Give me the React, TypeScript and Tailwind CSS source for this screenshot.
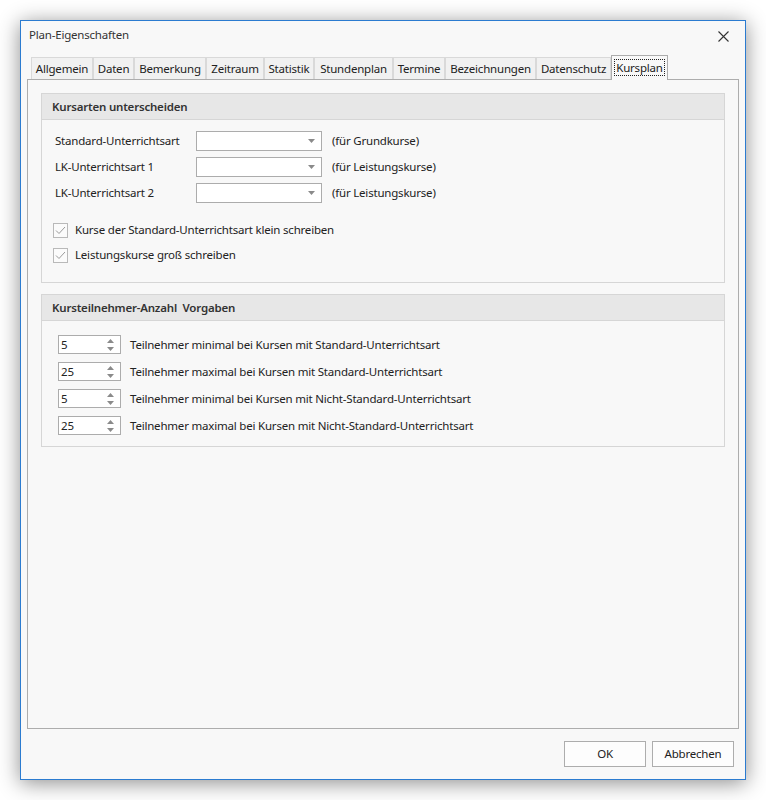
import React from 'react'

const tabs = [
  { label: 'Allgemein', w: 'w-[62px]' },
  { label: 'Daten', w: 'w-[41px]' },
  { label: 'Bemerkung', w: 'w-[72px]' },
  { label: 'Zeitraum', w: 'w-[58px]' },
  { label: 'Statistik', w: 'w-[50px]' },
  { label: 'Stundenplan', w: 'w-[79px]' },
  { label: 'Termine', w: 'w-[52px]' },
  { label: 'Bezeichnungen', w: 'w-[91px]' },
  { label: 'Datenschutz', w: 'w-[75px]' },
]

const dropdowns = [
  { label: 'Standard-Unterrichtsart', hint: '(für Grundkurse)' },
  { label: 'LK-Unterrichtsart 1', hint: '(für Leistungskurse)' },
  { label: 'LK-Unterrichtsart 2', hint: '(für Leistungskurse)' },
]

const spins = [
  { value: '5', text: 'Teilnehmer minimal bei Kursen mit Standard-Unterrichtsart' },
  { value: '25', text: 'Teilnehmer maximal bei Kursen mit Standard-Unterrichtsart' },
  { value: '5', text: 'Teilnehmer minimal bei Kursen mit Nicht-Standard-Unterrichtsart' },
  { value: '25', text: 'Teilnehmer maximal bei Kursen mit Nicht-Standard-Unterrichtsart' },
]

const Combo: React.FC = () => (
  <div className="w-[126px] h-[20px] bg-white border border-[#acacac] flex items-center justify-end pr-[6px]">
    <svg width="7" height="4" viewBox="0 0 7 4"><path d="M0 0h7L3.5 4z" fill="#8a8a8a" /></svg>
  </div>
)

const Check: React.FC<{ label: string }> = ({ label }) => (
  <div className="flex items-center h-[16px]">
    <div className="w-[15px] h-[15px] border border-[#b9b9b9] bg-[#fbfbfb] flex items-center justify-center">
      <svg width="11" height="9" viewBox="0 0 11 9"><path d="M1 4.5l3 3L10 1" fill="none" stroke="#9a9a9a" strokeWidth="1" /></svg>
    </div>
    <span className="ml-[7px]">{label}</span>
  </div>
)

const Spin: React.FC<{ value: string }> = ({ value }) => (
  <div className="w-[63px] h-[19px] bg-white border border-[#acacac] flex items-center justify-between pl-[2px] pr-[6px]">
    <span className="leading-none">{value}</span>
    <div className="flex flex-col gap-[4px]">
      <svg width="7" height="4" viewBox="0 0 7 4"><path d="M0 4h7L3.5 0z" fill="#8a8a8a" /></svg>
      <svg width="7" height="4" viewBox="0 0 7 4"><path d="M0 0h7L3.5 4z" fill="#8a8a8a" /></svg>
    </div>
  </div>
)

const Section: React.FC<{ title: string; children: React.ReactNode; className?: string }> = ({ title, children, className }) => (
  <div className={`border border-[#d6d6d6] ${className || ''}`}>
    <div className="h-[26px] bg-[#e7e7e7] border-b border-[#d6d6d6] flex items-center pl-[10px] font-semibold text-[#333] whitespace-pre">{title}</div>
    {children}
  </div>
)

const App: React.FC = () => {
  return (
    <div className="min-h-screen bg-white pt-[20px] pl-[20px] text-[11.5px] tracking-[-0.2px] text-[#222]" style={{ fontFamily: '"Noto Sans", "Liberation Sans", sans-serif' }}>
      <div className="w-[726px] h-[760px] border border-[#2b7bd0] bg-[#f8f8f8] flex flex-col shadow-[0_3px_20px_rgba(0,0,0,0.45)]">
        {/* Title bar */}
        <div className="h-[36px] flex items-start justify-between pl-[8px] pr-[16px] pt-[6px]">
          <span className="leading-[16px] text-[#333]">Plan-Eigenschaften</span>
          <svg width="11" height="11" viewBox="0 0 11 11" className="mt-[4px]"><path d="M0.5 0.5l10 10M10.5 0.5l-10 10" stroke="#333" strokeWidth="1.1" /></svg>
        </div>

        {/* Tabs */}
        <div className="h-[22px] flex items-end pl-[10px] relative z-10">
          {tabs.map(t => (
            <div key={t.label} className={`${t.w} h-[22px] border border-b-0 border-[#d9d9d9] bg-[#f1f1f1] flex items-center justify-center leading-none`}>
              {t.label}
            </div>
          ))}
          <div className="w-[57px] h-[25px] -mb-[1px] border border-b-0 border-[#acacac] bg-[#f8f8f8] flex items-start justify-center pt-[3px]">
            <span className="border border-dotted border-[#222] px-[1px] leading-[15px]">Kursplan</span>
          </div>
        </div>

        {/* Tab panel */}
        <div className="flex-1 mx-[6px] border border-[#adadad] px-[13px] pt-[13px]">
          <Section title="Kursarten unterscheiden">
            <div className="pt-[11px] pb-[19px]">
              <div className="flex flex-col gap-[6px] pl-[13px]">
                {dropdowns.map(d => (
                  <div key={d.label} className="flex items-center h-[20px]">
                    <span className="w-[141px]">{d.label}</span>
                    <Combo />
                    <span className="ml-[10px]">{d.hint}</span>
                  </div>
                ))}
              </div>
              <div className="flex flex-col gap-[9px] pl-[11px] mt-[19px]">
                <Check label="Kurse der Standard-Unterrichtsart klein schreiben" />
                <Check label="Leistungskurse groß schreiben" />
              </div>
            </div>
          </Section>

          <Section title="Kursteilnehmer-Anzahl  Vorgaben" className="mt-[11px]">
            <div className="pt-[14px] pb-[11px] pl-[16px] flex flex-col gap-[8px]">
              {spins.map((s, i) => (
                <div key={i} className="flex items-center h-[19px]">
                  <Spin value={s.value} />
                  <span className="ml-[9px]">{s.text}</span>
                </div>
              ))}
            </div>
          </Section>
        </div>

        {/* Footer */}
        <div className="h-[50px] flex items-center justify-end gap-[6px] pr-[11px]">
          <button className="w-[82px] h-[26px] bg-[#fdfdfd] border border-[#adadad] text-[#222]">OK</button>
          <button className="w-[82px] h-[26px] bg-[#fdfdfd] border border-[#adadad] text-[#222]">Abbrechen</button>
        </div>
      </div>
    </div>
  )
}

export default App
